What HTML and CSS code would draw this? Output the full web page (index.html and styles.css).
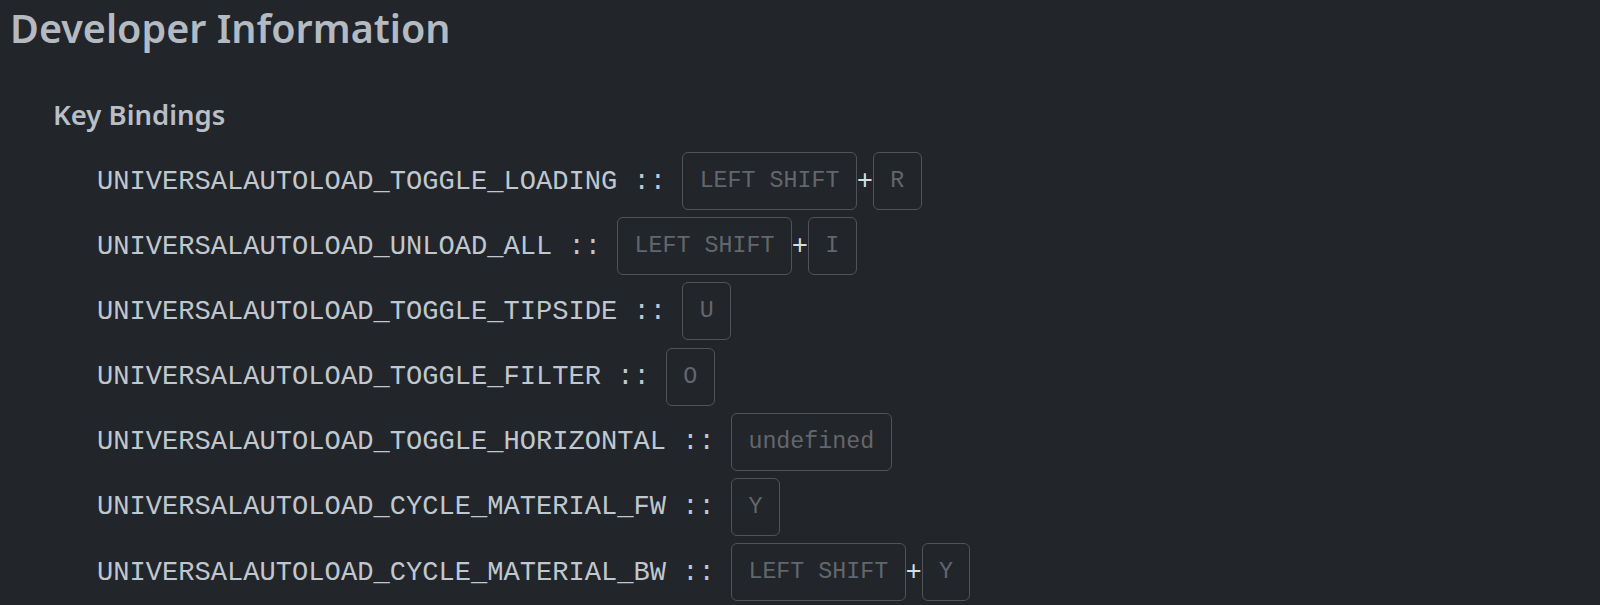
FILE: index.html
```html
<!DOCTYPE html>
<html>
<head>
<meta charset="utf-8">
<link rel="stylesheet" href="styles.css">
</head>
<body>
<div class="page">
  <h1 class="title">Developer Information</h1>
  <section class="section">
    <h2 class="subtitle">Key Bindings</h2>
    <ul class="bindings">
      <li class="row"><span class="name">UNIVERSALAUTOLOAD_TOGGLE_LOADING :: </span><kbd class="key">LEFT SHIFT</kbd><span class="plus">+</span><kbd class="key">R</kbd></li>
      <li class="row"><span class="name">UNIVERSALAUTOLOAD_UNLOAD_ALL :: </span><kbd class="key">LEFT SHIFT</kbd><span class="plus">+</span><kbd class="key">I</kbd></li>
      <li class="row"><span class="name">UNIVERSALAUTOLOAD_TOGGLE_TIPSIDE :: </span><kbd class="key">U</kbd></li>
      <li class="row"><span class="name">UNIVERSALAUTOLOAD_TOGGLE_FILTER :: </span><kbd class="key">O</kbd></li>
      <li class="row"><span class="name">UNIVERSALAUTOLOAD_TOGGLE_HORIZONTAL :: </span><kbd class="key">undefined</kbd></li>
      <li class="row"><span class="name">UNIVERSALAUTOLOAD_CYCLE_MATERIAL_FW :: </span><kbd class="key">Y</kbd></li>
      <li class="row"><span class="name">UNIVERSALAUTOLOAD_CYCLE_MATERIAL_BW :: </span><kbd class="key">LEFT SHIFT</kbd><span class="plus">+</span><kbd class="key">Y</kbd></li>
    </ul>
  </section>
</div>
</body>
</html>
```
FILE: styles.css
```css
html, body {
  margin: 0;
  padding: 0;
  background: #222529;
}
.page {
  padding: 0 0 0 10px;
  color: #b4bbc3;
  font-family: "Noto Sans", "Open Sans", sans-serif;
}
.title {
  margin: 0;
  padding-top: 0;
  font-size: 39.5px;
  font-weight: 600;
  line-height: 56px;
  color: #b3bac2;
}
.section {
  padding-left: 43px;
  margin-top: 39px;
}
.subtitle {
  margin: 0;
  font-size: 27.5px;
  font-weight: 600;
  line-height: 40px;
  color: #b8bfc7;
}
.bindings {
  list-style: none;
  margin: 0;
  padding: 0 0 0 44px;
  margin-top: 17px;
  display: flex;
  flex-direction: column;
  gap: 7.2px;
}
.row {
  display: flex;
  align-items: center;
  height: 58px;
  font-family: "Liberation Mono", monospace;
  font-size: 27.1px;
  color: #c0c7cf;
}
.name {
  white-space: pre;
}
.plus {
  color: #d8dde2;
}
.key {
  box-sizing: border-box;
  height: 58px;
  display: flex;
  align-items: center;
  padding: 0 16.3px;
  border: 1px solid #4f5459;
  border-radius: 6px;
  font-family: "Liberation Mono", monospace;
  font-size: 23.3px;
  color: #62676d;
}
```
